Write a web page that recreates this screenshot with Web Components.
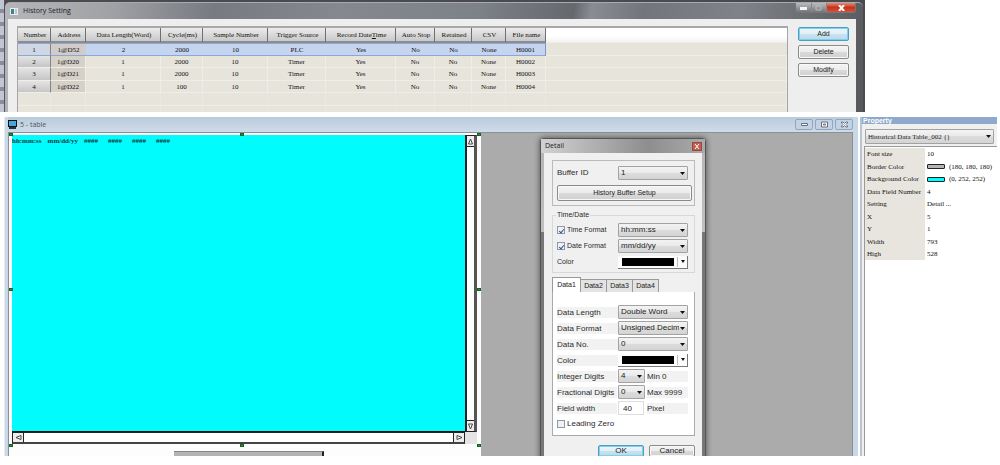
<!DOCTYPE html>
<html lang="en">
<head>
<meta charset="utf-8">
<title>History Setting</title>
<style>
html,body{height:100%}
body{margin:0;background:#fff;color:#2a2a2a;font-family:"Liberation Sans",Arial,sans-serif;font-size:8px;line-height:10px;overflow:hidden}
</style>
</head>
<body>
<hmi-editor></hmi-editor>
<script>
const define = (name, html, setup) => {
  const template = document.createElement('template');
  template.innerHTML = '<style>*{box-sizing:border-box}</style>' + html;
  customElements.define(name, class extends HTMLElement {
    constructor() {
      super();
      this.attachShadow({mode: 'open'}).append(template.content.cloneNode(true));
    }
    connectedCallback() {
      if (setup && !this.ready) { this.ready = true; setup(this, this.shadowRoot); }
    }
  });
};

/* push button */
define('ui-button', `<style>
:host{display:grid}
button{font:inherit;color:#222;padding:0;border:1px solid #8a8a8a;border-radius:2px;background:linear-gradient(#f4f4f4,#ebebeb 50%,#dadada 50%,#d0d0d0);box-shadow:inset 0 0 0 1px #f8f8f8;height:var(--h,14px);min-width:0;white-space:nowrap}
:host([primary]) button{border-color:#4b9fc2;background:linear-gradient(#edf5f9,#e1eff7 50%,#c9e2ef 50%,#bcd9e8);box-shadow:inset 0 0 0 1px #7ed0ee}
</style><button type="button"><slot></slot></button>`);

/* drop-down list */
define('ui-select', `<style>
:host{display:grid;align-items:center}
select{grid-area:1/1;appearance:none;font:inherit;color:#222;height:var(--h,14px);width:100%;margin:0;padding:0 8px 0 2px;border:1px solid #a2a2a2;border-radius:1px;background:linear-gradient(#f3f3f3,#e9e9e9 50%,#dcdcdc 50%,#d4d4d4);text-overflow:clip}
svg{grid-area:1/1;justify-self:end;margin-right:3px;pointer-events:none}
</style><select></select><svg width="5" height="3"><path d="M0 0h5L2.5 3z" fill="#111"/></svg>`,
(host, root) => {
  const s = root.querySelector('select');
  s.setAttribute('aria-label', host.getAttribute('label'));
  host.getAttribute('options').split('|').forEach(t => s.add(new Option(t)));
});

/* colour drop-down */
define('color-picker', `<style>
:host{display:grid}
button{display:grid;grid-template-columns:1fr 13px;align-items:center;height:13px;padding:0 0 0 4px;margin:0;border:solid #777;border-width:0 1px 1px 0;background:#fcfcfc}
i{height:8px;background:#000}
span{display:grid;place-items:center;height:10px;margin-left:3px;border-left:1px solid #bbb}
</style><button type="button" aria-label="Color"><i></i><span><svg width="4" height="3" style="display:block"><path d="M0 0h4L2 3z" fill="#111"/></svg></span></button>`);

/* tick box with its label */
define('ui-check', `<style>
:host{display:block}
label{display:flex;align-items:center;gap:2px;white-space:nowrap}
input{appearance:none;width:8px;height:8px;margin:0;border:1px solid #8d99a8;background:#eef1f5;display:grid;place-items:center}
input:checked::before{content:"";width:2px;height:4px;border:solid #35548f;border-width:0 1px 1px 0;transform:rotate(40deg)}
</style><label><input type="checkbox"><slot></slot></label>`,
(host, root) => { root.querySelector('input').checked = host.hasAttribute('checked'); });

/* record table */
define('history-table', `<style>
:host{display:block;min-width:0;overflow:hidden;border:1px solid #a5a5a5;border-top:2px solid #a8a8a8;border-bottom:0;
background:linear-gradient(#fff,#fff 8px,#f2f3f4 14px,#e7e4dc 15px)}
table{table-layout:fixed;border-collapse:separate;border-spacing:0;width:100%;font:7px/10px "Liberation Serif","Times New Roman",serif;color:#111;text-align:center}
th,td{padding:0;font-weight:400;white-space:nowrap;overflow:hidden}
th{height:15px;padding-left:2px;background:linear-gradient(#ececec,#dadada 50%,#c9c9c9);border-right:1px solid #6f6f6f;border-bottom:2px solid #8d8d8d}
th:last-child{background:none;border:0}
td{height:12px;border-right:1px solid #efede6;border-bottom:1px solid #efede6}
tr:nth-child(odd) td{height:13px}
td:first-child{background:linear-gradient(#e4e4e4,#c6c6c6);border-right:1px solid #858585}
td:nth-child(2){background:#d5d0c8}
tr.sel td{background:#c5d4ef;border:solid #8fa5d3;border-width:1px 0}
tr.sel td:first-child{background:#cfd6e4;border-right:1px solid #858585}
tr.sel td:nth-child(2){background:#cfccc9}
tr.sel td:nth-child(11){border-right:1px solid #7f95c5}
tr.sel td:last-child,tr.empty td{background:none;border-color:#efede6}
tr.sel td:last-child{border-top-color:transparent}
tr.empty td{border-right-color:#ebe8e1}
</style><table><colgroup></colgroup><thead><tr></tr></thead><tbody></tbody></table>`,
(host, root) => {
  const widths = [33,35,75,42,65,58,70,39,37,34,40];
  root.querySelector('colgroup').innerHTML = widths.map(w => `<col style="width:${w}px">`).join('') + '<col>';
  root.querySelector('thead tr').innerHTML = ['Number','Address','Data Length(Word)','Cycle(ms)','Sample Number','Trigger Source','Record Date<u>T</u>ime','Auto Stop','Retained','CSV','File name',''].map(t => `<th>${t}</th>`).join('');
  const rows = [['1','1@D52','2','2000','10','PLC','Yes','No','No','None','H0001'],['2','1@D20','1','2000','10','Timer','Yes','No','No','None','H0002'],['3','1@D21','1','2000','10','Timer','Yes','No','No','None','H0003'],['4','1@D22','1','100','10','Timer','Yes','No','No','None','H0004'],Array(11).fill(''),Array(11).fill('')];
  root.querySelector('tbody').innerHTML = rows.map((r,i) => `<tr class="${i===0?'sel':i>3?'empty':''}">${[...r,''].map(c => `<td>${c}</td>`).join('')}</tr>`).join('');
});

/* History Setting window */
define('history-window', `<style>
:host{display:flex;height:112px;overflow:hidden;background:#4a4b4e}
.edge{flex:0 0 5px;background:repeating-linear-gradient(#c4c5d2 0 9px,#8b8d9d 9px 13px);border-right:1px solid #55565c}
.win{flex:1;min-width:0;display:flex;flex-direction:column;margin-top:2px;margin-right:2px;padding:0 7px 0 3px;border-radius:5px 5px 0 0;border-top:1px solid #a9abb0;
background:linear-gradient(100deg,#b5b6b9 0,#a0a2a6 12%,#777a81 24%,#85888f 38%,#7d8188 54%,#65686d 65%,#898c92 67%,#72757b 73%,#7f8288 84%,#55575b 100%)}
header{display:flex;align-items:center;height:16px;gap:5px;padding-left:2px;flex:none;color:#222}
h1{flex:1;margin:0;font:400 7px/10px "Open Sans","Noto Sans",sans-serif}
.ctl{display:flex;align-self:flex-start;width:61px;height:10px;border:1px solid #777;border-top:0;border-radius:0 0 3px 3px;overflow:hidden}
.ctl button{flex:1;padding:0;border:0;border-right:1px solid #888;background:linear-gradient(#b9bbbe,#74767b);display:grid;place-items:center}
.ctl button:last-child{flex:0 0 28px;border:0;background:linear-gradient(#e28b78,#c8331b 50%,#d3523b)}
.body{flex:1;display:grid;grid-template-columns:1fr 51px;gap:10px;padding:7px 7px 0 9px;background:#eeeeee;min-height:0}
.side{display:flex;flex-direction:column;gap:4px;padding-top:1px;font-size:7px}
</style>
<div class="edge"></div>
<div class="win">
<header><svg width="8" height="7"><rect width="8" height="7" fill="#e8eef0"/><rect x="1" y="1" width="3" height="5" fill="#3b8590"/><rect x="5" y="1" width="2" height="5" fill="#b8c8d0"/></svg>
<h1>History Setting</h1>
<div class="ctl"><button aria-label="Minimize"><svg width="7" height="4"><rect width="7" height="3" y="1" fill="#f4f4f4"/></svg></button><button aria-label="Maximize"><svg width="7" height="6"><path d="M1 1h5v4H1z" fill="none" stroke="#b8babd"/></svg></button><button aria-label="Close"><svg width="7" height="6"><path d="M1 0l5 6M6 0L1 6" stroke="#fff" stroke-width="2"/></svg></button></div></header>
<div class="body"><history-table></history-table><div class="side"><ui-button primary>Add</ui-button><ui-button>Delete</ui-button><ui-button>Modify</ui-button></div></div>
</div>`);

/* canvas with the selected data-table object */
define('table-canvas', `<style>
:host{display:grid;grid-template-columns:1fr 12px;grid-template-rows:1fr 12px 12px;padding:2px 4px 0 3px;background:#fdfdfd;position:relative;min-width:0}
.view{background:#00fcfc;border-bottom:1px solid #111;padding-top:1px;font:700 7px/10px "Liberation Serif","Times New Roman",serif;color:#0b3a44;white-space:pre;overflow:hidden;display:flex;gap:6px}
.view span+span~span{padding-right:4px}
.v,.h{display:flex;justify-content:space-between;background:#fff;border:solid #222}
.v{flex-direction:column;border-width:1px 3px 1px 2px;border-right-color:#555}
.h{border-width:1px 1px 2px 1px;border-bottom-color:#444}
.v button,.h button{display:grid;place-items:center;padding:0;border:0;background:#eee}
.v button{height:11px}.h button{width:11px}
.v button:first-child{border-bottom:1px solid #222}.v button:last-child{border-top:1px solid #222}
.h button:first-child{border-right:1px solid #222}.h button:last-child{border-left:1px solid #222}
path{fill:#fff;stroke:#444}
.c{background:#e4e4e4}
.bar{grid-column:1/-1;align-self:end;height:5px;width:150px;margin-left:162px;background:#b4b4b4;border-top:1px solid #888;border-right:2px solid #222}
b{position:absolute;width:4px;height:3px;background:#2c9140;border:1px solid #176128}
</style>
<div class="view"><span>hh:mm:ss</span><span>mm/dd/yy</span><span>####</span><span>####</span><span>####</span><span>####</span></div>
<div class="v"><button aria-label="Up"><svg width="7" height="7"><path d="M3.500 1L5.500 6h-4z"/></svg></button><button aria-label="Down"><svg width="7" height="7"><path d="M3.500 6L5.500 1h-4z"/></svg></button></div>
<div class="h"><button aria-label="Left"><svg width="7" height="7"><path d="M1 3.500L6 1.500v4z"/></svg></button><button aria-label="Right"><svg width="7" height="7"><path d="M6 3.500L1 1.500v4z"/></svg></button></div>
<div class="c"></div><div class="bar"></div>
<b style="left:0;top:0"></b><b style="left:49%;top:0"></b><b style="right:0;top:0"></b>
<b style="left:0;top:48%"></b><b style="right:0;top:48%"></b>
<b style="left:0;bottom:9px"></b><b style="left:49%;bottom:9px"></b><b style="right:0;bottom:9px"></b>`);

/* drawing window */
define('table-window', `<style>
:host{display:flex;flex-direction:column;min-width:0;padding:0 5px 0 3px;background:#c9d8e8;border-left:1px solid #e8edf4}
header{display:flex;align-items:center;flex:none;height:15px;gap:3px;padding-left:0;background:linear-gradient(#b9cbdc,#cfdcea)}
h2{flex:1;margin:0;font:400 7px/10px "Open Sans","Noto Sans",sans-serif;color:#555}
.ctl{display:flex;gap:2px}
.ctl button{width:18px;height:11px;padding:0;border:1px solid #94a6bd;border-radius:2px;background:#c3d2e4;display:grid;place-items:center}
.ctl svg{fill:#fff;stroke:#66707d}
.desk{flex:1;display:grid;grid-template-columns:472fr 371fr;background:#ababab;border:solid #8b8f96;border-width:1px 1px 0;min-height:0}
</style>
<header><svg width="9" height="9"><rect width="9" height="7" fill="#111"/><rect x="1" y="1" width="7" height="5" fill="#4aa6d8"/><rect x="1" y="7" width="7" height="2" fill="#26313c"/></svg><h2>5 - table</h2>
<div class="ctl"><button aria-label="Minimize"><svg width="7" height="3"><path d="M.5.5h6v2h-6z"/></svg></button><button aria-label="Maximize"><svg width="7" height="7"><path d="M.5 1h6v5h-6zM2.500 3h2v1h-2z"/></svg></button><button aria-label="Close"><svg width="7" height="7"><path d="M.5 1h1.500l1.500 1.500L5 1h1.500v1L5 3.500 6.500 5v1H5L3.500 4.500 2 6H.5V5L2 3.500.5 2z"/></svg></button></div></header>
<div class="desk"><table-canvas></table-canvas></div>`);

/* Detail dialog */
define('detail-dialog', `<style>
:host{display:flex;flex-direction:column;padding:0 3px;border:1px solid #555;border-bottom:0;border-radius:4px 4px 0 0;background:linear-gradient(#b4b4b4 0,#c0c0c0 93px,#777 93px,#777);box-shadow:0 0 5px 1px #3339}
header{display:flex;align-items:center;height:14px;background:linear-gradient(90deg,#d2d2d2,#8e8e8e 65%,#aaa);margin:0 -3px;padding:0 3px 0 4px;flex:none}
h2{flex:1;margin:0;font:400 7px/10px "Open Sans","Noto Sans",sans-serif;color:#222}
header button{width:10px;height:9px;padding:0;border:1px solid #8d4c44;background:#c75c4d;display:grid;place-items:center}
.body{background:#f0f0f0;padding:7px 7px 0 8px}
fieldset{margin:0;padding:0 6px 0 4px;border:1px solid #d8d8d8;min-width:0}
.top{border-color:#bbb;padding:5px 2px 4px 4px;margin-bottom:4px}
.row{display:grid;grid-template-columns:61px 1fr;align-items:center;height:16px;white-space:nowrap}
.top .row{padding-right:4px;height:14px;margin-bottom:5px}
legend{padding:0 1px;margin-left:-1px;font-size:7px;line-height:10px}
.when{height:63px;padding-top:2px;font-size:7px}
.tabs{display:flex;align-items:flex-end;margin-top:4px;height:15px;font-size:7px}
.tabs button{font:inherit;color:#222;width:26px;height:13px;padding:0;border:1px solid #999;border-left:0;border-bottom:0;background:#e3e3e3}
.tabs button:first-child{width:29px;height:15px;border-left:1px solid #999;background:#fff}
.panel{background:#fff;border:1px solid #aaa;border-top:0;padding:12px 6px 3px 4px;height:144px}
.short{grid-template-columns:61px 27px 1fr}
label,.n{background:#f2f2f2;line-height:11px}
.short label{margin-right:1px}
.n{margin-left:2px}
input[type=text]{font:inherit;color:#222;width:26px;height:14px;padding:0 0 0 4px;border:1px solid #ddd;background:#fff}
footer{display:grid;grid-template-columns:46px 46px;gap:5px;justify-content:end;margin-top:9px;height:16px;line-height:8px}
footer ui-button{--h:12px;align-self:start}
</style>
<header><h2>Detail</h2><button aria-label="Close"><svg width="6" height="5"><path d="M1 0l4 5M5 0L1 5" stroke="#fff"/></svg></button></header>
<div class="body">
<fieldset class="top"><div class="row"><span>Buffer ID</span><ui-select label="Buffer ID" options="1"></ui-select></div><ui-button style="--h:16px;font-size:7px">History Buffer Setup</ui-button></fieldset>
<fieldset class="when"><legend>Time/Date</legend>
<div class="row"><ui-check checked>Time Format</ui-check><ui-select style="font-size:8px" label="Time Format" options="hh:mm:ss"></ui-select></div>
<div class="row"><ui-check checked>Date Format</ui-check><ui-select style="font-size:8px" label="Date Format" options="mm/dd/yy"></ui-select></div>
<div class="row"><span>Color</span><color-picker></color-picker></div></fieldset>
<div class="tabs" role="tablist"><button role="tab" aria-selected="true">Data1</button><button role="tab">Data2</button><button role="tab">Data3</button><button role="tab">Data4</button></div>
<div class="panel">
<div class="row"><label>Data Length</label><ui-select label="Data Length" options="Double Word"></ui-select></div>
<div class="row"><label>Data Format</label><ui-select label="Data Format" options="Unsigned Decim."></ui-select></div>
<div class="row"><label>Data No.</label><ui-select label="Data No." options="0"></ui-select></div>
<div class="row"><label>Color</label><color-picker></color-picker></div>
<div class="row short"><label>Integer Digits</label><ui-select label="Integer Digits" options="4"></ui-select><span class="n">Min 0</span></div>
<div class="row short"><label>Fractional Digits</label><ui-select label="Fractional Digits" options="0"></ui-select><span class="n">Max 9999</span></div>
<div class="row short"><label for="fw">Field width</label><input id="fw" type="text" value="40"><span class="n">Pixel</span></div>
<div class="row"><ui-check>Leading Zero</ui-check></div>
</div>
<footer><ui-button primary>OK</ui-button><ui-button>Cancel</ui-button></footer>
</div>`);

/* Property pane */
define('property-panel', `<style>
:host{display:flex;flex-direction:column;background:#f0f0f0;border-left:2px solid #b8c4d2;min-width:0;font:7px/10px "Liberation Serif","Times New Roman",serif;color:#111}
h2{margin:0;height:7px;flex:none;background:#8ea9cc;color:#fff;font:700 7px/7px "Liberation Sans",Arial,sans-serif;padding-left:1px}
ui-select{margin:5px 3px 2px 3px;--h:15px}
.list{flex:1;background:#fff;border:solid #999;border-width:1px 0 0 1px;margin-left:2px;padding-top:1px}
table{border-spacing:0;width:100%;table-layout:fixed}
th,td{height:12px;padding:0 0 0 2px;font-weight:400;text-align:left;white-space:nowrap}
th{width:60px;background:#e8e5de}
tr:nth-child(even)>*{height:13px}
i{display:inline-block;width:18px;height:5px;border:1px solid #222;border-radius:1px;margin-right:4px;vertical-align:middle}
</style>
<h2>Property</h2>
<ui-select label="Object" options="Historical Data Table_002 {}"></ui-select>
<div class="list"><table>
<tr><th>Font size</th><td>10</td></tr>
<tr><th>Border Color</th><td><i style="background:#b4b4b4"></i>(180, 180, 180)</td></tr>
<tr><th>Background Color</th><td><i style="background:#00fcfc"></i>(0, 252, 252)</td></tr>
<tr><th>Data Field Number</th><td>4</td></tr>
<tr><th>Setting</th><td>Detail ...</td></tr>
<tr><th>X</th><td>5</td></tr>
<tr><th>Y</th><td>1</td></tr>
<tr><th>Width</th><td>793</td></tr>
<tr><th>High</th><td>528</td></tr>
</table></div>`);

/* whole screen */
define('hmi-editor', `<style>
:host{display:flex;flex-direction:column;gap:5px;height:100%;padding-bottom:9px;box-sizing:border-box}
history-window{flex:none;width:86.5%}
main{flex:1;min-height:0;display:grid;grid-template-columns:1fr 137px;gap:2px;padding:0 3px 0 4px;position:relative;overflow:hidden}
detail-dialog{position:absolute;left:540px;top:21px;width:166px}
</style>
<history-window></history-window>
<main><table-window></table-window><property-panel></property-panel><detail-dialog></detail-dialog></main>`);
</script>
</body>
</html>
